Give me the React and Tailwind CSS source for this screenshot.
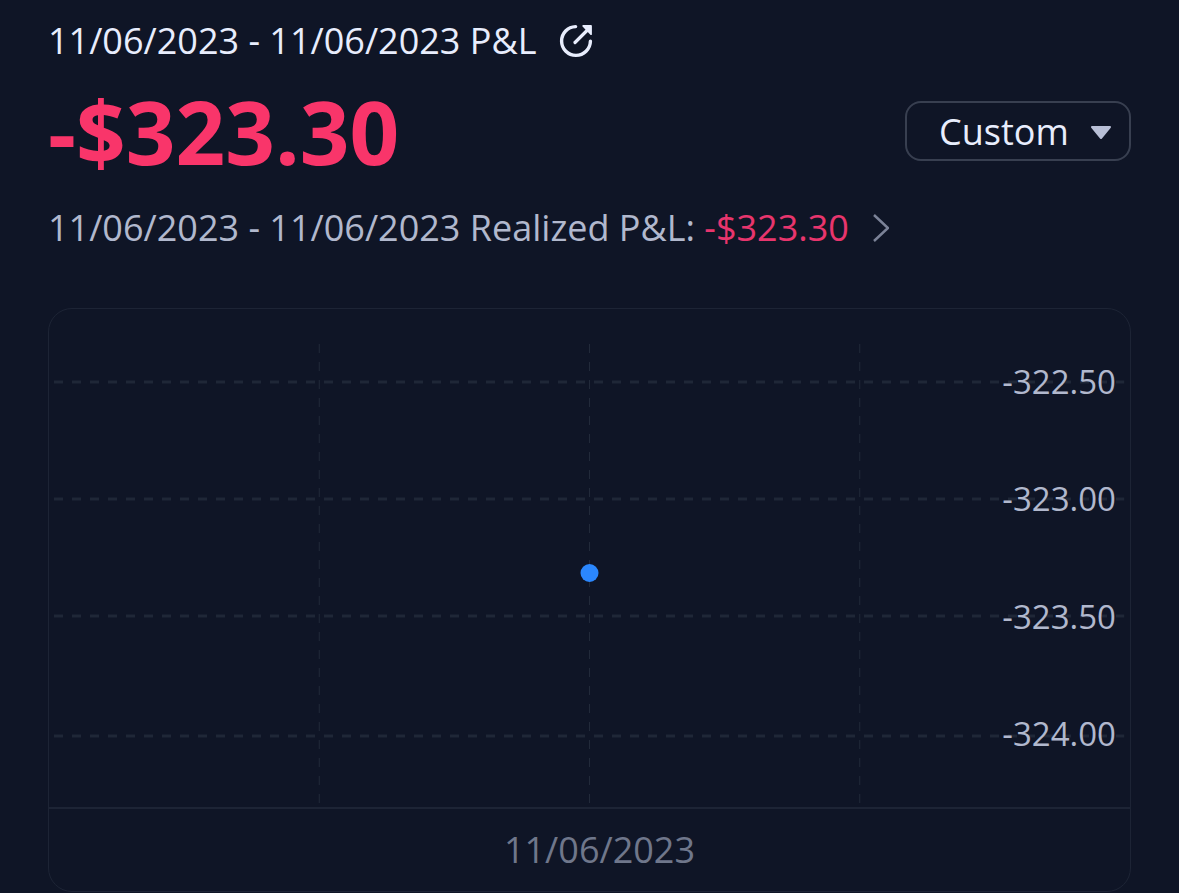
import { useState } from "react";

const PERIOD = "11/06/2023 - 11/06/2023";
const PNL = "-$323.30";

const ranges = ["1D", "1W", "1M", "1Y", "Custom"];

// line = grid line, base = label baseline, both from the top of the plot
const ticks = [
  { label: "-322.50", line: 73, base: 85 },
  { label: "-323.00", line: 190, base: 202 },
  { label: "-323.50", line: 307, base: 320 },
  { label: "-324.00", line: 427, base: 437 },
];

const columns = ["25%", "50%", "75%"];

const ShareIcon = () => (
  <svg className="block size-9" viewBox="0 0 36 36" fill="none" aria-hidden="true">
    <path
      d="M17.6 3.6A14.4 14.4 0 1 0 32.4 18.3"
      stroke="currentColor"
      strokeWidth="3.4"
      strokeLinecap="round"
    />
    <path d="M17 19.5L29 7.5" stroke="currentColor" strokeWidth="3.2" strokeLinecap="round" />
    <path
      d="M25.2 3H33V11.2Z"
      fill="currentColor"
      stroke="currentColor"
      strokeWidth="1.8"
      strokeLinejoin="round"
    />
  </svg>
);

const RangeSelect = () => {
  const [range, setRange] = useState("Custom");

  return (
    <div className="relative">
      <select
        aria-label="Date range"
        className="h-15 w-[226px] appearance-none rounded-2xl border-2 border-[#383f50] bg-[#0f1526] pt-0.5 pl-8 text-4xl text-[#e8edfd]"
        value={range}
        onChange={(e) => setRange(e.target.value)}
      >
        {ranges.map((r) => (
          <option key={r}>{r}</option>
        ))}
      </select>
      <svg
        className="pointer-events-none absolute top-6 right-5 h-4 w-5"
        viewBox="0 0 20 16"
        aria-hidden="true"
      >
        <path
          d="M1 2H19L10 13Z"
          fill="#b8bfd6"
          stroke="#b8bfd6"
          strokeWidth="2"
          strokeLinejoin="round"
        />
      </svg>
    </div>
  );
};

const PnlChart = () => (
  <div className="mt-[54px] rounded-3xl border border-[#1d2435]">
    <svg className="block h-[498px] w-full" role="img" aria-label="P&L chart">
      {/* grid */}
      <g stroke="#222a3a" strokeDasharray="9 9">
        {columns.map((x) => (
          <line key={x} x1={x} x2={x} y1="35" y2="494" />
        ))}
      </g>
      <svg x="5" width="100%" height="498">
        {ticks.map((tick) => (
          <line
            key={tick.label}
            x1="0"
            x2="99%"
            y1={tick.line}
            y2={tick.line}
            stroke="#1f2737"
            strokeWidth="3"
            strokeDasharray="9 9"
          />
        ))}
      </svg>

      {/* y axis */}
      <g fill="#b1b8cd" fontSize="33" textAnchor="end">
        {ticks.map((tick) => (
          <text key={tick.label} x="100%" y={tick.base} dx="-14">
            {tick.label}
          </text>
        ))}
      </g>

      <circle cx="50%" cy="264" r="9" fill="#2b87fd" />
    </svg>

    {/* x axis */}
    <div className="border-t-2 border-[#1d2435] pt-4 pb-4 pl-5 text-center text-4xl leading-[50px] text-[#6f778b]">
      11/06/2023
    </div>
  </div>
);

const App = () => {
  return (
    <main className="min-h-screen bg-[#0f1526] px-12 pt-4 font-['Open_Sans',sans-serif] text-4xl text-[#e8edfd]">
      <div className="flex items-center gap-[22px] leading-[50px]">
        <h1>{PERIOD} P&amp;L</h1>
        <button type="button" aria-label="Share">
          <ShareIcon />
        </button>
      </div>

      <div className="mt-[22px] flex items-center justify-between">
        <p className="text-[87px] leading-[86px] font-bold text-[#f9356a]">{PNL}</p>
        <RangeSelect />
      </div>

      <a href="#realized" className="mt-7 flex items-center gap-6 leading-[52px] text-[#b1b8cd]">
        <span>
          {PERIOD} Realized P&amp;L: <span className="text-[#e8356d]">{PNL}</span>
        </span>
        <svg className="h-7 w-4" viewBox="0 0 16 28" fill="none" aria-hidden="true">
          <path d="M1 1L15 14L1 27" stroke="#7b8297" strokeWidth="2.5" />
        </svg>
      </a>

      <PnlChart />
    </main>
  );
};

export default App;
